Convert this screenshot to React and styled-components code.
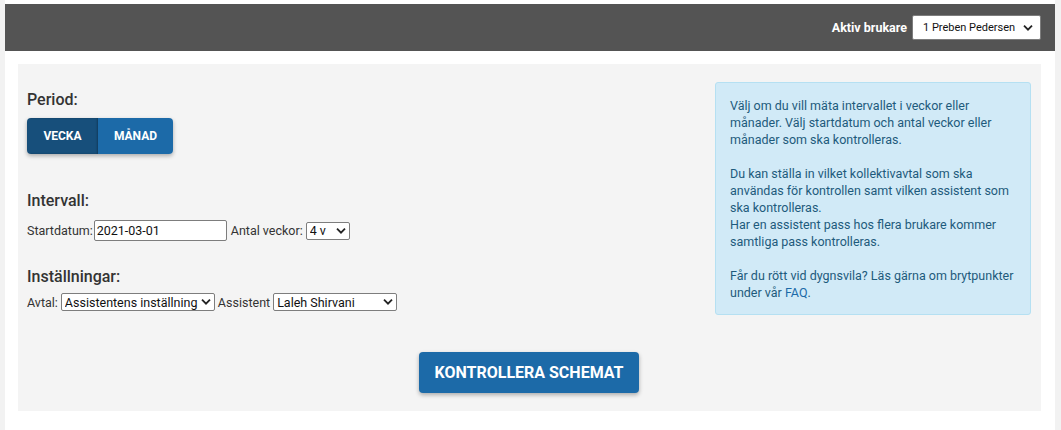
import React from "react"
import styled, { createGlobalStyle } from "styled-components"

const GlobalStyle = createGlobalStyle`
  html, body {
    margin: 0;
    padding: 0;
    background: #f2f2f2;
    font-family: Roboto, "Liberation Sans", Arial, sans-serif;
    color: #333;
  }
`

const Page = styled.div`
  margin: 0 6px 0 5px;
  background: #fff;
  padding-top: 4px;
  min-height: 430px;
  box-sizing: border-box;
`

const TopBar = styled.header`
  height: 47px;
  background: #545454;
  display: flex;
  align-items: center;
  justify-content: flex-end;
  padding: 0 14px;
  gap: 5px;
`

const TopLabel = styled.span`
  color: #fff;
  font-size: 12.5px;
  font-weight: 700;
`

const SelectWrap = styled.span`
  position: relative;
  display: inline-flex;
  margin: ${(p) => p.$margin || "0"};
`

const NativeSelect = styled.select`
  appearance: none;
  width: ${(p) => p.$w}px;
  height: ${(p) => p.$h}px;
  box-sizing: border-box;
  padding: 0 16px 0 ${(p) => p.$pl}px;
  font-family: inherit;
  font-size: ${(p) => p.$fs}px;
  color: #111;
  background: #fff;
  border: 1px solid #7d7d7d;
  border-radius: 2px;
  outline: none;
`

const Chevron = styled.svg`
  position: absolute;
  right: ${(p) => p.$r}px;
  top: 50%;
  width: 10px;
  height: 7px;
  transform: translateY(-50%);
  pointer-events: none;
`

const Select = ({ w, h, fs = 12.5, pl = 3, r = 4, margin, children }) => (
  <SelectWrap $margin={margin}>
    <NativeSelect $w={w} $h={h} $fs={fs} $pl={pl}>
      {children}
    </NativeSelect>
    <Chevron $r={r} viewBox="0 0 10 7">
      <path d="M1 1.2 L5 5.2 L9 1.2" fill="none" stroke="#222" strokeWidth="1.8" />
    </Chevron>
  </SelectWrap>
)

const Panel = styled.main`
  margin: 13px 14px 0 13px;
  background: #f4f4f4;
  padding: 18px 10px 18px 9px;
`

const Row = styled.div`
  display: flex;
  align-items: flex-start;
  justify-content: space-between;
`

const Column = styled.div`
  display: flex;
  flex-direction: column;
  align-items: flex-start;
`

const Heading = styled.h3`
  margin: ${(p) => p.$top}px 0 0;
  font-size: 16px;
  line-height: 20px;
  font-weight: 500;
  color: #333;
`

const Toggle = styled.div`
  display: flex;
  margin-top: 8px;
  border-radius: 4px;
  overflow: hidden;
  box-shadow: 0 2px 4px rgba(0, 0, 0, 0.3);
`

const ToggleButton = styled.button`
  width: ${(p) => p.$w}px;
  height: 36px;
  padding: 0;
  border: none;
  font-family: inherit;
  font-size: 12px;
  font-weight: 700;
  color: #fff;
  text-transform: uppercase;
  background: ${(p) => (p.$active ? "#174f7b" : "#1c6aa8")};
  box-shadow: ${(p) => (p.$active ? "inset -1px 0 2px rgba(0,0,0,0.25)" : "none")};
`

const FieldRow = styled.div`
  display: flex;
  align-items: center;
  margin-top: ${(p) => p.$top}px;
  font-size: 12.5px;
  color: #333;
`

const DateInput = styled.input`
  width: 133px;
  height: 21px;
  box-sizing: border-box;
  margin: 0 4px 0 1px;
  padding: 0 2px;
  font-family: inherit;
  font-size: 12.5px;
  color: #111;
  border: 1px solid #7d7d7d;
  border-radius: 2px;
  background: #fff;
  outline: none;
`

const InfoBox = styled.aside`
  width: 316px;
  box-sizing: border-box;
  background: #d1eaf7;
  border: 1px solid #b5e0f2;
  border-radius: 3px;
  padding: 14px 14px 13px;
  font-size: 12.5px;
  line-height: 17px;
  color: #1e5b7c;

  p {
    margin: 0;
  }
  p + p {
    margin-top: 17px;
  }
  a {
    color: #1c6aa8;
    text-decoration: none;
  }
`

const Actions = styled.div`
  display: flex;
  justify-content: center;
  margin-top: 37px;
`

const PrimaryButton = styled.button`
  width: 220px;
  height: 41px;
  padding: 0;
  border: none;
  border-radius: 4px;
  background: #1c6aa8;
  color: #fff;
  font-family: inherit;
  font-size: 16px;
  font-weight: 700;
  text-transform: uppercase;
  box-shadow: 0 2px 4px rgba(0, 0, 0, 0.3);
`

export default function App() {
  return (
    <>
      <GlobalStyle />
      <Page>
        <TopBar>
          <TopLabel>Aktiv brukare</TopLabel>
          <Select w={129} h={25} fs={11} pl={10} r={8}>
            <option value="1">1 Preben Pedersen</option>
          </Select>
        </TopBar>
        <Panel>
          <Row>
            <Column>
              <Heading $top={8}>Period:</Heading>
              <Toggle>
                <ToggleButton $active $w={71}>Vecka</ToggleButton>
                <ToggleButton $w={75}>Månad</ToggleButton>
              </Toggle>
              <Heading $top={37}>Intervall:</Heading>
              <FieldRow $top={9}>
                Startdatum:
                <DateInput type="text" defaultValue="2021-03-01" />
                Antal veckor:
                <Select w={44} h={18} margin="0 0 0 3px">
                  <option value="4">4 v</option>
                </Select>
              </FieldRow>
              <Heading $top={26}>Inställningar:</Heading>
              <FieldRow $top={6}>
                Avtal:
                <Select w={154} h={18} margin="0 3px">
                  <option value="a">Assistentens inställning</option>
                </Select>
                Assistent
                <Select w={124} h={18} margin="0 0 0 3px">
                  <option value="l">Laleh Shirvani</option>
                </Select>
              </FieldRow>
            </Column>
            <InfoBox>
              <p>
                Välj om du vill mäta intervallet i veckor eller månader. Välj
                startdatum och antal veckor eller månader som ska kontrolleras.
              </p>
              <p>
                Du kan ställa in vilket kollektivavtal som ska användas för
                kontrollen samt vilken assistent som ska kontrolleras.
                <br />
                Har en assistent pass hos flera brukare kommer samtliga pass
                kontrolleras.
              </p>
              <p>
                Får du rött vid dygnsvila? Läs gärna om brytpunkter under vår{" "}
                <a href="#faq">FAQ</a>.
              </p>
            </InfoBox>
          </Row>
          <Actions>
            <PrimaryButton>Kontrollera schemat</PrimaryButton>
          </Actions>
        </Panel>
      </Page>
    </>
  )
}
